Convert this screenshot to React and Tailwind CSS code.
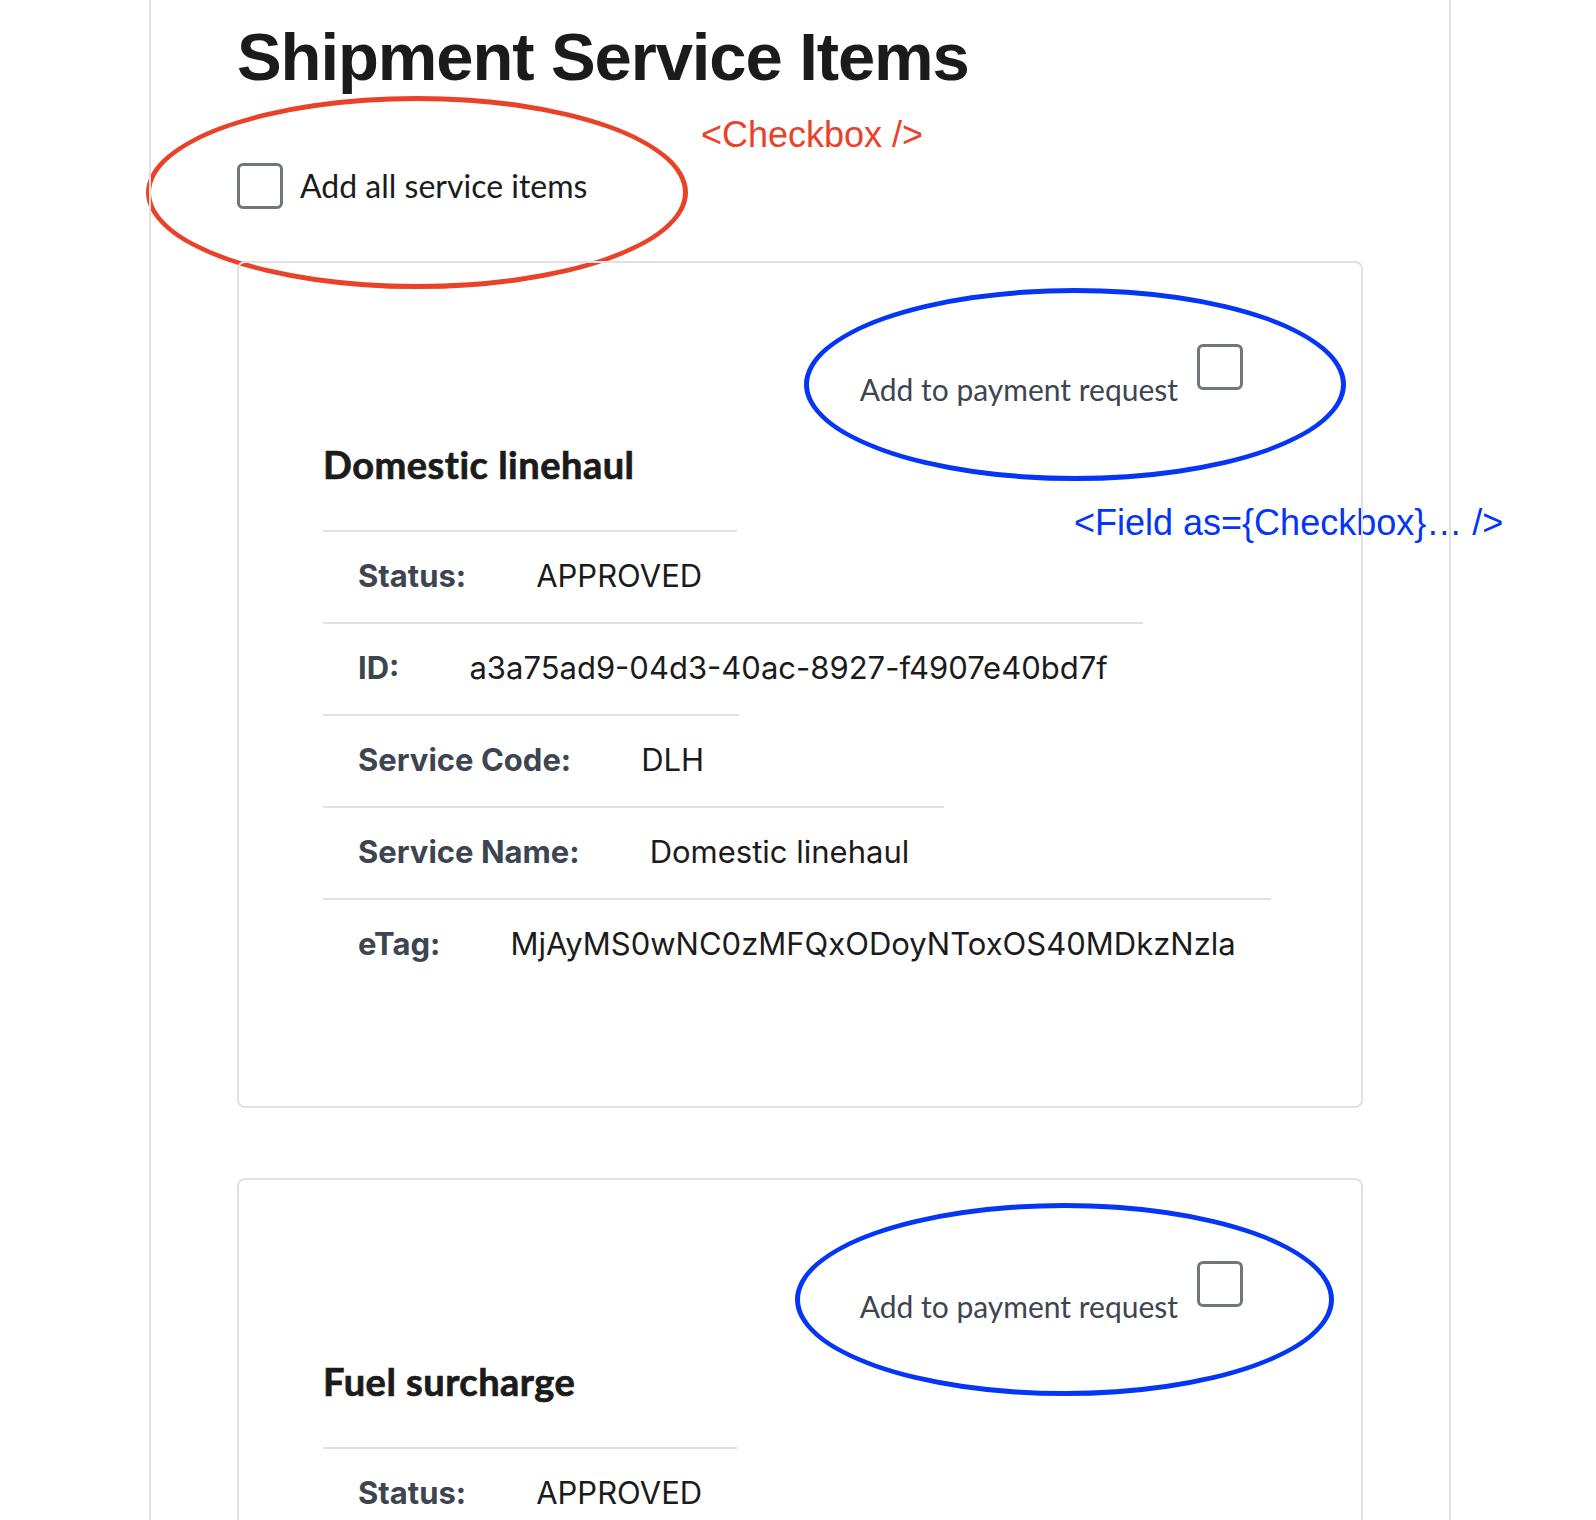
import React from "react";

const serviceItems = [
  {
    name: "Domestic linehaul",
    rows: [
      ["Status:", "APPROVED"],
      ["ID:", "a3a75ad9-04d3-40ac-8927-f4907e40bd7f"],
      ["Service Code:", "DLH"],
      ["Service Name:", "Domestic linehaul"],
      ["eTag:", "MjAyMS0wNC0zMFQxODoyNToxOS40MDkzNzla"],
    ],
  },
  {
    name: "Fuel surcharge",
    rows: [
      ["Status:", "APPROVED"],
      ["Service Code:", "FSC"],
      ["Service Name:", "Fuel surcharge"],
    ],
  },
];

export default function App() {
  return (
    <div className="relative h-[1520px] overflow-hidden bg-white text-[#1b1b1b]">
      {/* ===== annotations (drawn under the page borders) ===== */}
      <div className="absolute left-[146px] top-[96px] w-[542px] h-[193px] rounded-[50%] border-[5px] border-[#ea4129]" />
      <div className="absolute left-[701px] top-[117px] text-[36px] leading-[36px] text-[#ea4129] font-['Liberation_Sans',Arial,sans-serif] whitespace-nowrap">
        {"<Checkbox />"}
      </div>
      <div className="absolute left-[804px] top-[288px] w-[542px] h-[193px] rounded-[50%] border-[5px] border-[#0535f5]" />
      <div className="absolute left-[1074px] top-[505px] text-[36px] leading-[36px] text-[#0535f5] font-['Liberation_Sans',Arial,sans-serif] whitespace-nowrap">
        {"<Field as={Checkbox}… />"}
      </div>
      <div className="absolute left-[795px] top-[1203px] w-[539px] h-[193px] rounded-[50%] border-[5px] border-[#0535f5]" />

      {/* ===== page ===== */}
      <main className="relative ml-[149px] w-[1302px] min-h-[1520px] border-x-2 border-[#dfe1e2] px-[86px]">
        <h1 className="pt-[23px] text-[67px] leading-[67px] font-bold tracking-[-1.1px] font-['Liberation_Sans',Arial,sans-serif]">
          Shipment Service Items
        </h1>

        <label className="mt-[73px] flex items-center gap-[17px] w-fit">
          <Checkbox />
          <span className="text-[32px] leading-[38px] font-['Lato',sans-serif]">Add all service items</span>
        </label>

        {serviceItems.map((item, i) => (
          <ServiceItemCard key={item.name} item={item} className={i === 0 ? "mt-[52px]" : "mt-[70px]"} />
        ))}
      </main>
    </div>
  );
}

function ServiceItemCard({ item, className = "" }) {
  return (
    <section className={`rounded-[8px] border-2 border-[#dfe1e2] pt-[81px] pl-[84px] pr-[118px] pb-[116px] ${className}`}>
      <div className="flex justify-end items-start gap-[19px]">
        <span className="mt-[27px] text-[30px] leading-[36px] text-[#3d4551] font-['Lato',sans-serif]">
          Add to payment request
        </span>
        <Checkbox />
      </div>
      <h3 className="mt-[35px] text-[38px] leading-[44px] font-bold tracking-[0.5px] [-webkit-text-stroke:0.7px_#1b1b1b] font-['Lato',sans-serif]">
        {item.name}
      </h3>
      <div className="mt-[44px]">
        {item.rows.map(([label, value]) => (
          <DetailRow key={label} label={label} value={value} />
        ))}
      </div>
    </section>
  );
}

function DetailRow({ label, value }) {
  return (
    <div className="flex w-fit border-t-2 border-[#dfe1e2] pt-[26px] pb-[28px] leading-[36px] text-[31px] font-['Inter',sans-serif]">
      <span className="px-[35px] font-bold text-[#3d4551]">{label}</span>
      <span className="px-[35px] text-[#1b1b1b]">{value}</span>
    </div>
  );
}

function Checkbox() {
  return <span className="block w-[46px] h-[46px] shrink-0 rounded-[6px] border-[3px] border-[#71767a] bg-white" />;
}
